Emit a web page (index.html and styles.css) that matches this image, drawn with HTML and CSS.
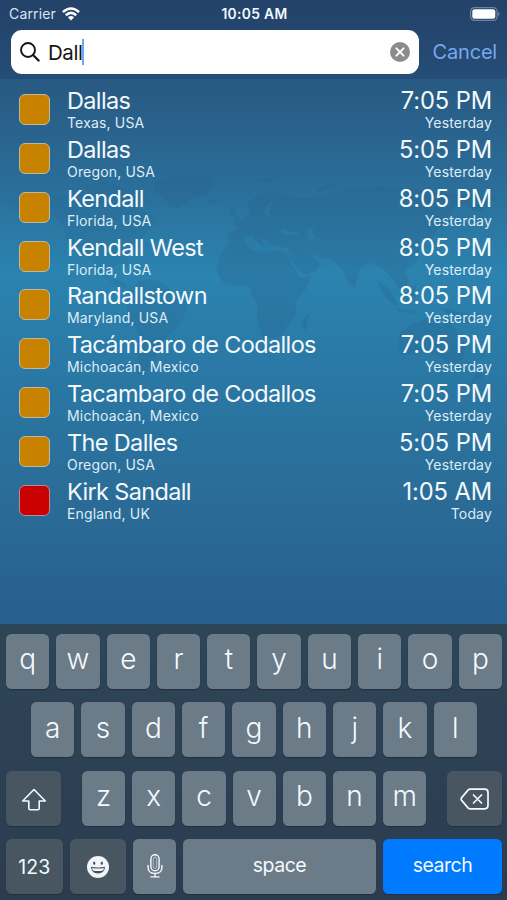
FILE: index.html
```html
<!DOCTYPE html>
<html lang="en">
<head>
<meta charset="utf-8">
<title>City search</title>
<link rel="stylesheet" href="styles.css">
</head>
<body>
<div class="screen">
  <svg class="map" viewBox="0 0 507 240" aria-hidden="true">
    <path opacity=".55" d="M4 42L14 37 40 34 62 36 85 34 108 38 132 38 138 48 150 53 158 62 148 70 143 77 136 86 132 92 128 98 127 107 121 103 108 108 110 118 122 121 129 129 139 133 131 129 116 126 105 119 96 107 88 97 77 93 66 80 63 66 54 56 38 50 20 54Z"/>
    <path opacity=".75" d="M139 121L153 119 166 125 175 135 187 142 185 154 178 166 168 175 158 192 151 205 143 217 137 213 137 195 139 173 127 156 127 135Z"/>
    <path d="M155 22L175 14 198 14 216 18 211 28 207 34 194 38 185 43 178 48 170 46 164 38 155 31Z"/>
    <path opacity=".6" d="M80 26L105 22 120 28 145 35 152 43 139 43 119 36 91 34Z"/>
    <path d="M208 41L216 38 221 40 215 43 209 42ZM256 20L267 18 277 19 268 23ZM314 30L324 25 338 24 328 29 319 32Z"/>
    <path d="M228 84L245 81 249 88 262 93 275 90 287 93 293 106 300 118 311 116 305 130 295 143 296 154 287 166 280 177 264 179 258 163 257 145 253 137 250 127 236 125 222 122 216 110 220 95Z"/>
    <path d="M227 73L238 70 235 63 245 58 251 52 247 43 257 36 271 31 288 36 302 38 324 36 344 30 362 27 381 26 401 28 426 31 453 34 477 34 501 39 489 42 482 52 474 51 465 45 453 49 447 60 437 70 430 81 420 77 420 89 417 101 405 110 409 121 402 133 392 118 382 108 371 102 359 110 355 128 348 123 343 110 333 100 318 97 311 94 316 100 322 104 315 112 304 115 296 107 289 95 288 88 270 85 267 80 261 78 265 88 258 83 251 75 242 81 229 83Z"/>
    <path fill="#2e80aa" d="M264 54L269 43 273 41 269 50 269 56ZM281 71L285 69 289 72 298 72 297 75 282 74ZM306 70L314 67 312 72 315 78 309 80Z"/>
    <path d="M230 49L235 50 237 56 242 62 233 64 237 58 231 55Z"/>
    <path d="M304 158L310 152 306 170 301 169Z"/>
    <path d="M377 120L388 128 399 146 395 146 384 136ZM396 148L415 151 414 154 397 151ZM403 134L416 125 415 140 406 143ZM440 147L470 155 479 164 463 162 447 154Z"/>
    <path d="M400 172L413 164 427 158 435 160 442 166 448 157 455 170 466 184 463 200 449 205 439 196 424 191 402 196 398 187Z"/>
    <path d="M478 210L484 216 476 221 468 228Z"/>
  </svg>
  <header class="header">
    <div class="status">
      <div class="carrier"><span>Carrier</span>
        <svg class="wifi" viewBox="0 0 18 14"><g fill="none" stroke="currentColor" stroke-width="2.5"><path d="M.9 5.2Q9-2.2 17.1 5.2M3.8 8.2Q9 3.6 14.2 8.2"/></g><path fill="currentColor" d="M5.9 10.2Q9 7.8 12.1 10.2L9 13.6Z"/></svg>
      </div>
      <div class="clock">10:05 AM</div>
      <svg class="battery" viewBox="0 0 30 14"><rect x=".6" y=".6" width="26.5" height="12.8" rx="3.8" fill="none" stroke="#71839b" stroke-width="1.2"/><rect x="2.3" y="2.3" width="23" height="9.4" rx="2.3" fill="#fff"/><path d="M28.2 4.7Q31 7 28.2 9.3Z" fill="#71839b"/></svg>
    </div>
    <div class="searchbar">
      <div class="field">
        <svg class="lens" viewBox="0 0 20 20"><circle cx="8" cy="8" r="7" fill="none" stroke="#151515" stroke-width="1.9"/><path d="M13 13L18.6 18.5" stroke="#151515" stroke-width="2.3" stroke-linecap="round"/></svg>
        <span class="query">Dall</span><span class="caret"></span>
        <svg class="clear" viewBox="0 0 20 20"><circle cx="10" cy="10" r="10" fill="#8b8b90"/><path d="M6.4 6.4L13.6 13.6M13.6 6.4L6.4 13.6" stroke="#fff" stroke-width="2" stroke-linecap="round"/></svg>
      </div>
      <span class="cancel">Cancel</span>
    </div>
  </header>
  <main class="list">
    <div class="row"><i class="swatch"></i><div class="place"><b>Dallas</b><small>Texas, USA</small></div><div class="time"><b>7:05 PM</b><small>Yesterday</small></div></div>
    <div class="row"><i class="swatch"></i><div class="place"><b>Dallas</b><small>Oregon, USA</small></div><div class="time"><b>5:05 PM</b><small>Yesterday</small></div></div>
    <div class="row"><i class="swatch"></i><div class="place"><b>Kendall</b><small>Florida, USA</small></div><div class="time"><b>8:05 PM</b><small>Yesterday</small></div></div>
    <div class="row"><i class="swatch"></i><div class="place"><b>Kendall West</b><small>Florida, USA</small></div><div class="time"><b>8:05 PM</b><small>Yesterday</small></div></div>
    <div class="row"><i class="swatch"></i><div class="place"><b>Randallstown</b><small>Maryland, USA</small></div><div class="time"><b>8:05 PM</b><small>Yesterday</small></div></div>
    <div class="row"><i class="swatch"></i><div class="place"><b>Tacámbaro de Codallos</b><small>Michoacán, Mexico</small></div><div class="time"><b>7:05 PM</b><small>Yesterday</small></div></div>
    <div class="row"><i class="swatch"></i><div class="place"><b>Tacambaro de Codallos</b><small>Michoacán, Mexico</small></div><div class="time"><b>7:05 PM</b><small>Yesterday</small></div></div>
    <div class="row"><i class="swatch"></i><div class="place"><b>The Dalles</b><small>Oregon, USA</small></div><div class="time"><b>5:05 PM</b><small>Yesterday</small></div></div>
    <div class="row"><i class="swatch red"></i><div class="place"><b>Kirk Sandall</b><small>England, UK</small></div><div class="time"><b>1:05 AM</b><small>Today</small></div></div>
  </main>
  <section class="keyboard">
    <div class="keys"><span>q</span><span>w</span><span>e</span><span>r</span><span>t</span><span>y</span><span>u</span><span>i</span><span>o</span><span>p</span></div>
    <div class="keys middle"><span>a</span><span>s</span><span>d</span><span>f</span><span>g</span><span>h</span><span>j</span><span>k</span><span>l</span></div>
    <div class="keys third">
      <span class="dark"><svg class="shift" viewBox="0 0 26 24"><path d="M13 1.5L24.3 13H18.2V20.2Q18.2 21.7 16.7 21.7H9.3Q7.8 21.7 7.8 20.2V13H1.7Z" fill="none" stroke="currentColor" stroke-width="1.6" stroke-linejoin="round"/></svg></span>
      <span>z</span><span>x</span><span>c</span><span>v</span><span>b</span><span>n</span><span>m</span>
      <span class="dark"><svg class="delete" viewBox="0 0 30 22"><path d="M10.2 1.2H24.8Q28 1.2 28 4.4V17.6Q28 20.8 24.8 20.8H10.2Q9 20.8 8 19.8L1.7 12.4Q.6 11 1.7 9.6L8 2.2Q9 1.2 10.2 1.2ZM13.5 7L21.5 15M21.5 7L13.5 15" fill="none" stroke="currentColor" stroke-width="1.7" stroke-linecap="round"/></svg></span>
    </div>
    <div class="keys bottom">
      <span class="dark num">123</span>
      <span class="dark"><svg class="face" viewBox="0 0 22 22"><circle cx="11" cy="11" r="11" fill="#f2f6fa"/><ellipse cx="7.2" cy="7.2" rx="1.1" ry="1.6" fill="#46545f"/><ellipse cx="14.8" cy="7.2" rx="1.1" ry="1.6" fill="#46545f"/><path d="M3.9 10.8Q11 12.3 18.1 10.8Q17.4 17.5 11 17.5Q4.6 17.5 3.9 10.8Z" fill="#46545f"/><path d="M5 12Q11 13.1 17 12L16.2 14.4Q11 15.4 5.8 14.4Z" fill="#f2f6fa"/></svg></span>
      <span><svg class="mic" viewBox="0 0 16 24"><g fill="none" stroke="currentColor" stroke-width="1.4" stroke-linecap="round"><rect x="3.9" y=".8" width="8.2" height="16" rx="4.1"/><rect x="6.3" y="3.2" width="3.4" height="11.2" rx="1.7" stroke-width=".5"/><path d="M1.1 11.5V13.2Q1.1 19.4 8 19.4Q14.9 19.4 14.9 13.2V11.5M8 19.4V22.8M4 22.9H12"/></g></svg></span>
      <span>space</span>
      <span class="blue">search</span>
    </div>
  </section>
</div>
</body>
</html>
```

FILE: styles.css
```css
* { box-sizing: border-box; }
body { margin: 0; font-family: Inter, "Liberation Sans", sans-serif; color: #f4f9fd; }
svg { display: block; }
.screen {
  position: relative; width: 507px; height: 900px; overflow: hidden;
  display: flex; flex-direction: column;
  background: linear-gradient(#234269 0, #285982 80px, #2a6d98 180px, #2b83af 272px, #2a79a6 365px, #2a6c97 500px, #275f8d 624px);
}
.map { position: absolute; left: 0; top: 160px; width: 507px; height: 240px; fill: #285f88; opacity: .24; }
.header { position: relative; height: 79px; flex: none; background: linear-gradient(#234269, #254d76); }
.status { height: 30px; display: grid; grid-template-columns: 1fr auto 1fr; align-items: center; padding: 0 7px 3px 9px; font-size: 14px; }
.carrier { display: flex; align-items: center; gap: 6px; letter-spacing: .15px; color: #dbe4ee; }
.wifi { width: 18px; height: 14px; color: #fff; }
.clock { font-weight: 600; font-size: 13.8px; letter-spacing: .35px; margin-right: 0; }
.battery { width: 30px; height: 14px; justify-self: end; }
.searchbar { display: flex; align-items: center; padding: 0 10px 0 11px; justify-content: space-between; }
.field { width: 408px; height: 44px; background: #fff; border-radius: 11px; display: flex; align-items: center; padding: 0 9px; color: #151515; }
.lens { width: 20px; height: 20px; margin-right: 8px; }
.query { font-size: 20.5px; letter-spacing: -.45px; }
.caret { width: 2px; height: 26px; background: #6fa8f5; }
.clear { width: 20px; height: 20px; margin-left: auto; }
.cancel { font-size: 20px; letter-spacing: -.2px; color: #78a6f0; }
.list { position: relative; height: 545px; flex: none; padding: 6px 15px 0 19px; }
.row { height: 48.87px; display: flex; align-items: center; }
.swatch { width: 31px; height: 31px; border-radius: 6px; background: #c78300; border: 1px solid #bdb9a1; margin-right: 17px; }
.red { background: #c80000; border-color: #b98a9c; }
.place, .time { display: flex; flex-direction: column; }
.time { margin-left: auto; text-align: right; }
.row b { font-weight: 400; font-size: 23.5px; line-height: 27px; letter-spacing: -.1px; }
.row .place b { letter-spacing: -.65px; }
.row .time b { font-size: 23.7px; }
.row small { font-size: 14px; line-height: 18px; letter-spacing: .17px; color: #dfecf5; }
.keyboard { position: relative; height: 276px; flex: none; background: linear-gradient(#2d4657, #2c3c50); padding: 9.5px 5px 0 6px; display: flex; flex-direction: column; gap: 13.5px; }
.keys { display: grid; grid-template-columns: repeat(10, 1fr); gap: 7px; height: 55px; }
.keys span { display: flex; align-items: center; justify-content: center; border-radius: 5.5px; background: #6c7b88; box-shadow: 0 1px 1px #22303d; font-size: 28px; font-weight: 300; padding-bottom: 4px; }
.keys.third { display: flex; }
.third span { width: 43.2px; }
.third .dark { width: 55px; }
.third .dark:first-child { margin-right: 14px; }
.third .dark:last-child { margin-left: auto; }
.keys.middle { grid-template-columns: repeat(9, 1fr); padding: 0 25px; }
.keys .dark { background: #485661; padding-bottom: 0; }
.keys.bottom { grid-template-columns: 56.5px 56.5px 43px 193px 1fr; }
.bottom span { font-size: 19.5px; font-weight: 400; letter-spacing: -.5px; }
.bottom .num { letter-spacing: 0; }
.keys .blue { background: #007aff; }
.shift { width: 26px; height: 24px; margin-top: 3px; }
.delete { width: 30px; height: 22px; margin-top: 2px; }
.face { width: 22px; height: 22px; }
.mic { width: 16px; height: 24px; margin-top: 3px; }
```
